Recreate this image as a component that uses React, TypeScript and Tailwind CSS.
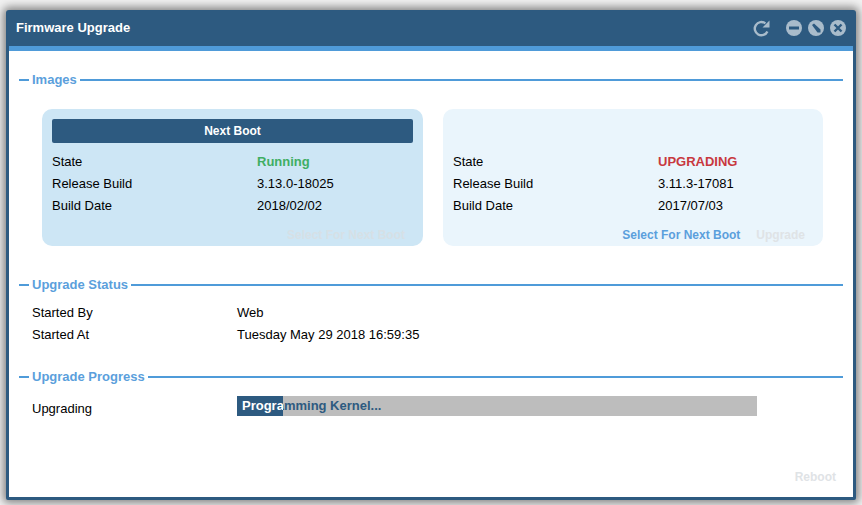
const font = "font-['Liberation_Sans',Arial,sans-serif]";

function Legend({ title }: { title: string }) {
  return (
    <div className="flex items-center h-4 gap-[3px]">
      <div className="w-[10px] h-[2px] bg-[#4f9bd9]" />
      <span className="text-[13px] leading-4 font-bold text-[#5b9fdc]">{title}</span>
      <div className="flex-1 h-[2px] bg-[#4f9bd9]" />
    </div>
  );
}

function InfoRow({ label, value, valueClass }: { label: string; value: string; valueClass?: string }) {
  return (
    <div className="flex h-[22px] items-center text-[13px] text-black">
      <div className="w-[205px]">{label}</div>
      <div className={valueClass}>{value}</div>
    </div>
  );
}

function RefreshIcon() {
  return (
    <svg width="17" height="17" viewBox="0 0 17 17" fill="none" className="mr-[10px]">
      <path d="M14.4 11.4A6.6 6.6 0 1 1 12.4 3.4" stroke="#a9bccb" strokeWidth="2.4" />
      <path d="M16.5 0.5v7H9.5z" fill="#a9bccb" />
    </svg>
  );
}

function MinusIcon() {
  return (
    <svg width="16" height="16" viewBox="0 0 16 16">
      <circle cx="8" cy="8" r="8" fill="#a9bccb" />
      <rect x="3" y="6.5" width="10" height="3" fill="#2d5a80" />
    </svg>
  );
}

function RestoreIcon() {
  return (
    <svg width="16" height="16" viewBox="0 0 16 16">
      <circle cx="8" cy="8" r="8" fill="#a9bccb" />
      <path d="M4 5L6 3.5L12.5 9.5V12.5H9.5z" fill="#2d5a80" />
    </svg>
  );
}

function CloseIcon() {
  return (
    <svg width="16" height="16" viewBox="0 0 16 16">
      <circle cx="8" cy="8" r="8" fill="#a9bccb" />
      <path d="M4.5 4.5L11.5 11.5M11.5 4.5L4.5 11.5" stroke="#2d5a80" strokeWidth="2.4" />
    </svg>
  );
}

export default function App() {
  return (
    <div className={`${font} w-[862px] h-[505px] overflow-hidden bg-[#f1f1f1] pt-[10px] pl-[6px]`}>
      <div className="w-[850px] h-[490px] flex flex-col rounded-t-[3px] rounded-b-[2px] bg-[#2d5a80] shadow-[0_0_8px_3px_rgba(0,0,0,0.45)]">
        {/* Title bar */}
        <div className="h-[36px] shrink-0 flex items-center pl-[10px] pr-[10px]">
          <span className="text-[13px] font-bold text-white">Firmware Upgrade</span>
          <div className="ml-auto flex items-center gap-[6px]">
            <RefreshIcon />
            <MinusIcon />
            <RestoreIcon />
            <CloseIcon />
          </div>
        </div>

        <div className="flex-1 mx-[3px] mb-[3px] bg-white border-t-[5px] border-[#4f9bd9] px-[10px] pt-[21px] flex flex-col relative">
          <Legend title="Images" />

          {/* Image cards */}
          <div className="flex gap-[20px] pl-[23px] pt-[21px]">
            <div className="w-[381px] h-[137px] rounded-[10px] bg-[#cde6f5] px-[10px] pt-[10px]">
              <div className="h-[24px] rounded-[2px] bg-[#2d5a80] text-white text-xs font-bold flex items-center justify-center">
                Next Boot
              </div>
              <div className="pt-[8px]">
                <InfoRow label="State" value="Running" valueClass="font-bold text-[#3fae63]" />
                <InfoRow label="Release Build" value="3.13.0-18025" />
                <InfoRow label="Build Date" value="2018/02/02" />
              </div>
              <div className="flex justify-end pr-[8px] pt-[10px] text-xs font-bold text-[#d6e0e6]">
                Select For Next Boot
              </div>
            </div>
            <div className="w-[380px] h-[137px] rounded-[10px] bg-[#eaf5fc] px-[10px] pt-[42px]">
              <InfoRow label="State" value="UPGRADING" valueClass="font-bold text-[#c8383e]" />
              <InfoRow label="Release Build" value="3.11.3-17081" />
              <InfoRow label="Build Date" value="2017/07/03" />
              <div className="flex justify-end gap-4 pr-[8px] pt-[10px] text-xs font-bold">
                <span className="text-[#5b9fdc]">Select For Next Boot</span>
                <span className="text-[#dfe3e6]">Upgrade</span>
              </div>
            </div>
          </div>

          <div className="pt-[31px]">
            <Legend title="Upgrade Status" />
          </div>
          <div className="pl-[13px] pt-[9px]">
            <InfoRow label="Started By" value="Web" />
            <InfoRow label="Started At" value="Tuesday May 29 2018 16:59:35" />
          </div>

          <div className="pt-[23px]">
            <Legend title="Upgrade Progress" />
          </div>
          <div className="flex pl-[13px] pt-[11px]">
            <div className="w-[205px] pt-[2px] text-[13px] leading-[22px] text-black">Upgrading</div>
            <div className="relative w-[520px] h-[20px] bg-[#bdbdbd] text-[13px] leading-[20px] font-bold text-[#2d5a80] pl-[5px]">
              Programming Kernel...
              <div className="absolute left-0 top-0 h-[20px] w-[46px] overflow-hidden bg-[#2d5a80] pl-[5px] text-white whitespace-nowrap">
                Programming Kernel...
              </div>
            </div>
          </div>

          <div className="mt-auto flex justify-end pr-[7px] pb-[12px] text-xs font-bold text-[#dfe3e6]">Reboot</div>
        </div>
      </div>
    </div>
  );
}
